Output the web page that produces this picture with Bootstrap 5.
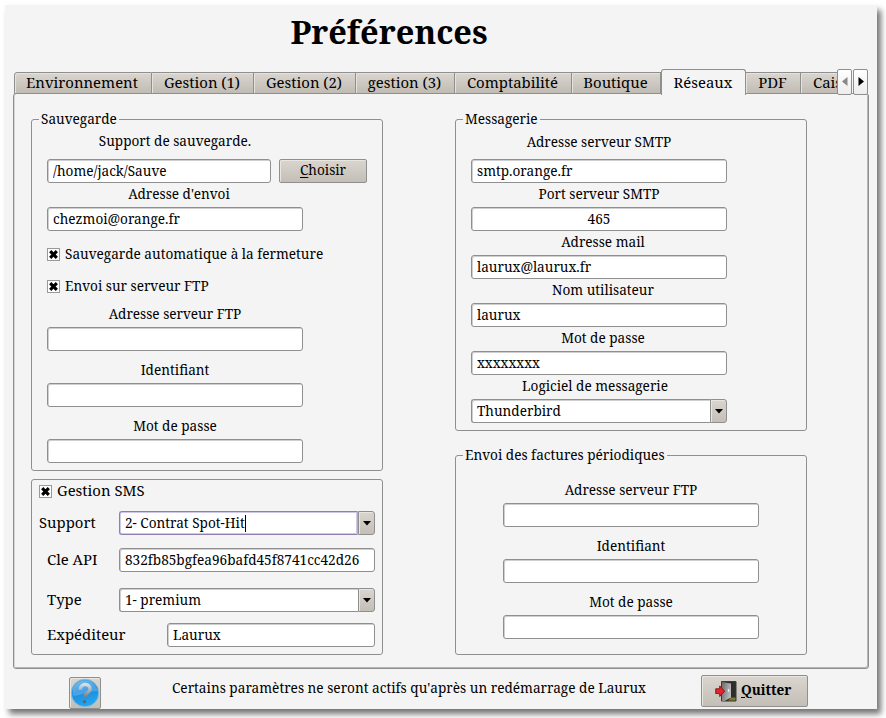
<!DOCTYPE html>
<html lang="fr">
<head>
<meta charset="utf-8">
<title>Préférences</title>
<meta name="viewport" content="width=device-width, initial-scale=1">
<link href="https://cdn.jsdelivr.net/npm/bootstrap@5.3.0/dist/css/bootstrap.min.css" rel="stylesheet">
<style>
:root{--line:#8f8f8f;--face:#f4f4f4}
body{background:#fff;color:#000;font:13.6px/18px "Noto Serif","DejaVu Serif Condensed",serif;height:718px;padding:5px 0 0 5px}
.dialog-window{width:872px;height:704px;background:var(--face);box-shadow:4px 5px 6px rgba(0,0,0,.55)}
.dialog-title{font-size:32.6px;line-height:54px;height:64px;width:768px;font-weight:700}
.big-text{font-size:14.9px}
/* tab strip */
.tab-strip{height:26px;padding-left:9px;padding-right:9px}
.pref-tabs{height:22px;margin-top:3px;flex:1 1 0;min-width:0}
.pref-tabs .nav-link{height:22px;padding:0 1px 0 0;font-size:14.9px;line-height:19px;color:#000;border:1px solid var(--line);border-left-width:0;border-radius:0;background:linear-gradient(#dad6cf,#c0bbb3);text-align:center;box-shadow:inset 1px 1px #e6e3de;margin:0}
.pref-tabs .nav-item:first-child .nav-link{border-left-width:1px;border-top-left-radius:3px;padding-right:2px}
.pref-tabs .nav-link.active{background:var(--face);border:1px solid var(--line);border-bottom:0;color:#000;height:26px;margin-top:-3px;border-radius:3px 3px 0 0;line-height:24px;box-shadow:none;position:relative;z-index:2}
.tab-wa{width:138px}.tab-wb{width:102px}.tab-wc{width:99px}.tab-wd{width:117px}.tab-we{width:89px}.tab-wf{width:85px}.tab-wg{width:55px}.tab-wh{width:36px}
.pref-tabs .tab-wh .nav-link{overflow:hidden;text-align:left;padding-left:12px;border-right:0;white-space:nowrap}
.scroll-pair{gap:1px}
.scroll-btn{width:15px;height:26px;border:1px solid var(--line);border-radius:2px;background:linear-gradient(#fff,#ededed);padding:0 0 2px}
/* page of the selected tab */
.tab-pane-box{margin:-2px 8px 0 8px;height:576px;border:1px solid var(--line);border-radius:3px;padding:16px 0 0 17px;box-shadow:inset 1px 0 #d5d5d5,inset -1px -1px #b5b5b5}
.left-col{width:352px;margin-right:72px}
.right-col{width:352px}
.group-box{border:1px solid var(--line);border-radius:3px;padding:0 15px;margin:0;min-width:0}
.group-box legend{float:none;width:auto;font-size:13.6px;line-height:18px;height:18px;margin:0 0 0 -8px;padding:0 2px}
.box-sauv{height:361px}
.box-msg{height:321px;margin-bottom:15px}
.box-ftp{height:209px}
.box-sms{height:176px;margin-top:8px;padding:1px 7px 0 7px}
.cap{line-height:22px;height:24px;width:256px;text-align:center}
.cap-first{height:31px;line-height:27px}
.first-left{line-height:25px}
.cap-tall{height:32px;line-height:38px}
.nudge-right{padding-left:8px}
.nudge-left{padding-right:8px}
.fld{height:24px;width:256px;border:1px solid var(--line);border-radius:3px;padding:0 5px;font:inherit;line-height:22px;color:#000;background:#fff;box-shadow:inset 1px 1px #cfcfcf}
input.fld{padding-bottom:2px}
.fld-active{box-shadow:inset 0 0 0 1px #cfc8e6;border-color:#8f7fb0}
.text-caret{width:1px;height:17px;background:#000}
.btn-bevel{border:1px solid var(--line);border-radius:2px;background:linear-gradient(#dad6cf,#c3beb6);color:#000;font:inherit;padding:0;box-shadow:inset 1px 1px #e9e6e1}
.check-list{padding-top:7px;height:72px}
.check-row{height:32px}
.tick{width:13px;height:13px;border:1px solid #999;background:#fff;margin-right:5px}
.combo{width:256px}
.combo .fld{width:239px;border-radius:3px 0 0 3px;border-right:0}
.combo .fld-active{border-right:1px solid #b3a8d0}
.combo .btn-bevel{width:17px;height:24px;border-radius:0 3px 3px 0}
.sms-head{height:20px}
.sms-head .sms-text{padding-bottom:2px}
.sms-a{margin-top:10px}.sms-b{margin-top:13px}.sms-c{margin-top:16px}.sms-d{margin-top:11px}
.sms-lbl{flex:0 0 80px;font-size:14.9px;padding-bottom:2px}
.sms-wide{flex-basis:128px}
.sms-sender{width:208px}
.w-first{width:224px}
.pick-btn{padding-bottom:2px}
.ftp-body{padding:7px 0 0 32px}
u{text-underline-offset:2px}
/* bottom bar */
.help-btn{width:32px;height:32px;margin-left:64px;margin-top:8px}
.note-text{margin-left:71px;margin-top:10px;width:476px;white-space:nowrap;font-size:13.63px}
.quit-btn{width:107px;height:32px;margin-left:53px;margin-top:6px;font-weight:700;gap:4px;padding-left:13px}
.quit-btn .quit-label{padding-bottom:3px}
</style>
</head>
<body>
<svg width="0" height="0" class="d-none">
  <symbol id="cross" viewBox="0 0 11 11"><path d="M2.200 2.200l6.600 6.600M8.800 2.200L2.200 8.800" stroke="#000" stroke-width="3.100"/></symbol>
  <symbol id="drop" viewBox="0 0 8 5"><path d="M0 0h8L4 4.600z"/></symbol>
</svg>
<main class="dialog-window">
  <h1 class="dialog-title text-center mb-0">Préférences</h1>

  <div class="tab-strip d-flex">
    <ul class="nav pref-tabs flex-nowrap">
      <li class="nav-item tab-wa"><a class="nav-link" href="#">Environnement</a></li>
      <li class="nav-item tab-wb"><a class="nav-link" href="#">Gestion (1)</a></li>
      <li class="nav-item tab-wb"><a class="nav-link" href="#">Gestion (2)</a></li>
      <li class="nav-item tab-wc"><a class="nav-link" href="#">gestion (3)</a></li>
      <li class="nav-item tab-wd"><a class="nav-link" href="#">Comptabilité</a></li>
      <li class="nav-item tab-we"><a class="nav-link" href="#">Boutique</a></li>
      <li class="nav-item tab-wf"><a class="nav-link active" href="#">Réseaux</a></li>
      <li class="nav-item tab-wg"><a class="nav-link" href="#">PDF</a></li>
      <li class="nav-item tab-wh"><a class="nav-link" href="#">Caisse</a></li>
    </ul>
    <div class="d-flex scroll-pair">
      <button class="scroll-btn d-flex align-items-center justify-content-center" aria-label="Précédent"><svg width="6" height="9" viewBox="0 0 6 9"><path d="M5.500 0v9L0 4.500z" fill="#888"/></svg></button>
      <button class="scroll-btn d-flex align-items-center justify-content-center" aria-label="Suivant"><svg width="6" height="9" viewBox="0 0 6 9"><path d="M.5 0v9L6 4.500z" fill="#000"/></svg></button>
    </div>
  </div>

  <section class="tab-pane-box d-flex align-items-start">
    <div class="left-col">
      <fieldset class="group-box box-sauv">
        <legend>Sauvegarde</legend>
        <div class="cap cap-first first-left">Support de sauvegarde.</div>
        <div class="d-flex gap-2">
          <input class="form-control fld w-first" value="/home/jack/Sauve">
          <button class="btn btn-bevel pick-btn flex-fill"><u>C</u>hoisir</button>
        </div>
        <div class="cap nudge-right">Adresse d'envoi</div>
        <input class="form-control fld" value="chezmoi@orange.fr">
        <div class="check-list">
          <label class="check-row d-flex align-items-center"><span class="tick"><svg width="11" height="11" class="d-block"><use href="#cross"/></svg></span>Sauvegarde automatique à la fermeture</label>
          <label class="check-row d-flex align-items-center"><span class="tick"><svg width="11" height="11" class="d-block"><use href="#cross"/></svg></span>Envoi sur serveur FTP</label>
        </div>
        <div class="cap">Adresse serveur FTP</div>
        <input class="form-control fld">
        <div class="cap cap-tall">Identifiant</div>
        <input class="form-control fld">
        <div class="cap cap-tall">Mot de passe</div>
        <input class="form-control fld">
      </fieldset>

      <div class="group-box box-sms">
        <label class="sms-head d-flex align-items-center big-text"><span class="tick"><svg width="11" height="11" class="d-block"><use href="#cross"/></svg></span><span class="sms-text">Gestion SMS</span></label>
        <div class="d-flex align-items-center sms-a">
          <span class="sms-lbl">Support</span>
          <div class="combo d-flex">
            <div class="form-control fld fld-active d-flex align-items-center">2- Contrat Spot-Hit<span class="text-caret"></span></div>
            <button class="btn btn-bevel d-flex align-items-center justify-content-center" aria-label="Ouvrir"><svg width="8" height="5"><use href="#drop"/></svg></button>
          </div>
        </div>
        <div class="d-flex align-items-center sms-b">
          <span class="sms-lbl ps-2">Cle API</span>
          <input class="form-control fld" value="832fb85bgfea96bafd45f8741cc42d26">
        </div>
        <div class="d-flex align-items-center sms-c">
          <span class="sms-lbl ps-2">Type</span>
          <div class="combo d-flex">
            <div class="form-control fld">1- premium</div>
            <button class="btn btn-bevel d-flex align-items-center justify-content-center" aria-label="Ouvrir"><svg width="8" height="5"><use href="#drop"/></svg></button>
          </div>
        </div>
        <div class="d-flex align-items-center sms-d">
          <span class="sms-lbl sms-wide ps-2">Expéditeur</span>
          <input class="form-control fld sms-sender" value="Laurux">
        </div>
      </div>
    </div>

    <div class="right-col">
      <fieldset class="group-box box-msg">
        <legend>Messagerie</legend>
        <div class="cap cap-first">Adresse serveur SMTP</div>
        <input class="form-control fld" value="smtp.orange.fr">
        <div class="cap">Port serveur SMTP</div>
        <input class="form-control fld text-center" value="465">
        <div class="cap nudge-right">Adresse mail</div>
        <input class="form-control fld" value="laurux@laurux.fr">
        <div class="cap nudge-right">Nom utilisateur</div>
        <input class="form-control fld" value="laurux">
        <div class="cap nudge-right">Mot de passe</div>
        <input class="form-control fld" value="xxxxxxxx">
        <div class="cap nudge-left">Logiciel de messagerie</div>
        <div class="combo d-flex">
          <div class="form-control fld">Thunderbird</div>
          <button class="btn btn-bevel d-flex align-items-center justify-content-center" aria-label="Ouvrir"><svg width="8" height="5"><use href="#drop"/></svg></button>
        </div>
      </fieldset>

      <fieldset class="group-box box-ftp">
        <legend>Envoi des factures périodiques</legend>
        <div class="ftp-body">
          <div class="cap cap-tall">Adresse serveur FTP</div>
          <input class="form-control fld">
          <div class="cap cap-tall">Identifiant</div>
          <input class="form-control fld">
          <div class="cap cap-tall">Mot de passe</div>
          <input class="form-control fld">
        </div>
      </fieldset>
    </div>
  </section>

  <footer class="d-flex align-items-start">
    <button class="btn btn-bevel help-btn d-flex align-items-center justify-content-center" aria-label="Aide">
      <svg width="30" height="30" viewBox="0 0 30 30">
        <defs>
          <linearGradient id="ball" x1="0" y1="0" x2=".3" y2="1"><stop offset="0" stop-color="#5db4ea"/><stop offset=".5" stop-color="#1c8bdc"/><stop offset="1" stop-color="#22a5ee"/></linearGradient>
          <linearGradient id="mark-fill" x1="0" y1="0" x2="0" y2="1"><stop offset="0" stop-color="#d3dee6"/><stop offset="1" stop-color="#747c83"/></linearGradient>
        </defs>
        <circle cx="15" cy="15" r="13.800" fill="url(#ball)" stroke="#8bbbd8" stroke-width="1"/>
        <path d="M2.500 17C6 20 18 12 27.500 13A12.800 12.800 0 0 0 3 10.500Z" fill="#fff" opacity=".2"/>
        <path d="M10.200 11.800C10 4.800 20.500 5 20 11.300C19.700 15.200 15 14.500 15 19.500" fill="none" stroke="url(#mark-fill)" stroke-width="3.400"/>
        <circle cx="14.500" cy="23.800" r="1.700" fill="#5c6874"/>
      </svg>
    </button>
    <span class="note-text">Certains paramètres ne seront actifs qu'après un redémarrage de Laurux</span>
    <button class="btn btn-bevel quit-btn d-flex align-items-center">
      <svg width="22" height="21" viewBox="0 0 22 21">
        <defs><linearGradient id="door" x1="0" y1="0" x2="1" y2=".4"><stop offset="0" stop-color="#6b6b6b"/><stop offset="1" stop-color="#b9b9b9"/></linearGradient></defs>
        <path d="M6.500.5h14.500v19.500H6.500z" fill="#2d2d2b" stroke="#3b3b39"/>
        <path d="M13 19.500l3-3h4.500v3z" fill="#7c7a2c"/>
        <path d="M7 1l9 1.500v14L9.500 20H7z" fill="url(#door)"/>
        <path d="M13.500 8v3" stroke="#eee" stroke-width="1.300"/>
        <path d="M.7 7.800h4V4.900l5 5.300-5 5.300v-2.900h-4z" fill="#e0262c" stroke="#8c1015" stroke-width=".9"/>
      </svg>
      <span class="quit-label"><u>Q</u>uitter</span>
    </button>
  </footer>
</main>
<script src="https://cdn.jsdelivr.net/npm/bootstrap@5.3.0/dist/js/bootstrap.bundle.min.js"></script>
</body>
</html>
